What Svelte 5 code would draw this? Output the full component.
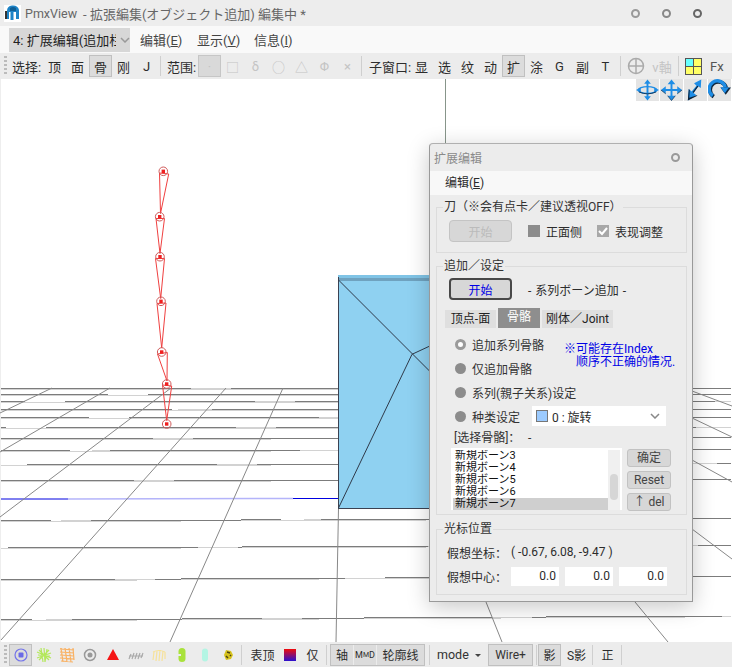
<script>
  const selectItems = ['顶', '面', '骨', '刚', 'J'];
  const rangeItems = ['·', '□', 'δ', '○', '△', 'Φ', '×'];
  const windowItems = ['显', '选', '纹', '动', '扩', '涂', 'G', '副', 'T'];
  const boneNames = ['新規ボーン3', '新規ボーン4', '新規ボーン5', '新規ボーン6', '新規ボーン7'];

  // floor grid, [y at left edge, y at right edge]
  const floorRows = [
    [388.5, 388], [395, 394], [402, 401], [410, 409], [418, 417], [428, 427], [439, 437],
    [451, 449], [465, 463], [481, 479], [521, 518], [548, 545], [580, 576], [620, 616]
  ];
  const floorCols = [
    [52, 388, 0, 413], [110, 388, 0, 452], [171, 388, 0, 517], [226, 388, 1, 640], [283, 388, 170, 642],
    [338.5, 508, 336, 642], [692, 391, 732, 406], [692, 418, 732, 437], [692, 460, 732, 482],
    [692, 529, 732, 559], [635, 602, 668, 642], [486, 602, 502, 642]
  ];

  // joints of the bone chain
  const joints = [[163.3, 171.3], [159.7, 216.7], [160, 256.7], [161, 301.3], [161.7, 352], [166.7, 384], [166.7, 424]];
  const cones = [
    '159.5,173 168.7,174 160.5,213.5',
    '156,218.5 164.5,218.5 160,253.5',
    '155.5,258.5 164.5,258.5 160.7,298.5',
    '157,303.5 166,303 161.7,348',
    '157.5,354 167.3,352.5 167,381',
    '162.5,385 171.7,386 166.7,420.5'
  ];
</script>

<div class="app">
  <header class="titlebar">
    <svg class="logo" viewBox="0 0 17 17">
      <rect width="17" height="17" fill="#fff" />
      <path d="M3 14V6q0-5 5-5.500q6-.5 7 4.500v9h-3V7H9.500v8H6.500V7H5v7z" fill="#1d83c6" />
      <path d="M6 3q3-2 6 0v3H6z" fill="#0e5f96" />
      <path d="M1 6h2v8H1z" fill="#333" />
    </svg>
    <span class="app-name">PmxView</span>
    <span class="doc-name">- 拡張編集(オブジェクト追加) 編集中 *</span>
    <div class="win-dots">
      <i class="dot d1"></i>
      <i class="dot d2"></i>
      <i class="dot d3"></i>
    </div>
  </header>

  <nav class="menubar">
    <div class="mode-combo">
      <span>4: 扩展编辑(追加栏</span>
      <svg viewBox="0 0 10 6" width="10" height="6"><path d="M1 1l4 4 4-4" fill="none" stroke="#999" stroke-width="1.500" /></svg>
    </div>
    <span class="menu-item">编辑(<u>E</u>)</span>
    <span class="menu-item">显示(<u>V</u>)</span>
    <span class="menu-item">信息(<u>I</u>)</span>
  </nav>

  <div class="toolbar">
    <i class="grip"></i>
    <span class="tb-label l1">选择:</span>
    {#each selectItems as item}
      <button class="tb" class:on={item === '骨'}>{item}</button>
    {/each}
    <i class="sep s1"></i>
    <span class="tb-label l2">范围:</span>
    {#each rangeItems as item, i}
      <button class="tb off" class:pressed={i === 0}>{item}</button>
    {/each}
    <i class="sep s2"></i>
    <span class="tb-label l3">子窗口:</span>
    {#each windowItems as item}
      <button class="tb" class:on={item === '扩'}>{item}</button>
    {/each}
    <i class="sep s3"></i>
    <button class="tb">
      <svg viewBox="0 0 18 18" width="18" height="18">
        <circle cx="9" cy="9" r="7.500" fill="none" stroke="#aaa" stroke-width="1.500" />
        <path d="M9 1v16M1 9h16" stroke="#aaa" stroke-width="1.500" />
      </svg>
    </button>
    <button class="tb off vaxis">v軸</button>
    <i class="sep s4"></i>
    <svg class="panes" viewBox="0 0 17 17" width="17" height="17">
      <rect x=".5" y=".5" width="16" height="16" fill="#ffff66" stroke="#555" />
      <rect x="1" y="1" width="7.500" height="7.500" fill="#66ffff" />
      <path d="M8.500 1v15M1 8.500h15" stroke="#555" />
    </svg>
    <span class="fx">Fx</span>
  </div>

  <main class="viewport">
    <svg class="scene" viewBox="0 79 732 563" width="732" height="563">
      {#each floorRows as [a, b], i}
        <line x1="1" y1={a + 0.5} x2="731" y2={b + 0.5} stroke="#d2d2d2" stroke-width="1.500" shape-rendering="crispEdges" />
        <line x1="1" y1={a} x2="731" y2={b} stroke="#7c7c7c" stroke-dasharray="190 40" stroke-dashoffset={i * 83} shape-rendering="crispEdges" />
      {/each}
      <line x1="1" y1="499" x2="68" y2="499" stroke="#0000e0" />
      <line x1="68" y1="499" x2="293" y2="498.500" stroke="#b4b4fa" stroke-width="1.500" />
      <line x1="293" y1="498.500" x2="338" y2="498.500" stroke="#0000e0" />
      {#each floorCols as [x1, y1, x2, y2]}
        <line {x1} {y1} {x2} {y2} stroke="#888" />
      {/each}
      <line x1="445.500" y1="79" x2="445.500" y2="143" stroke="#87958a" />

      <rect x="338" y="275" width="300" height="233" fill="#8fd1f1" />
      <rect x="338" y="275" width="300" height="3" fill="#80c4e6" />
      <rect x="338" y="278" width="300" height="3" fill="#6fa2bf" />
      <path d="M338.500 277V508M338 508.500H640" stroke="#3b4252" fill="none" />
      <path d="M338.500 280L432 373.500M412 354.300L432 345M412 354.300L338.500 508" stroke="#2f3a4a" fill="none" />

      {#each cones as points}
        <polygon {points} fill="none" stroke="#f04040" />
      {/each}
      {#each joints as [x, y]}
        <circle cx={x} cy={y} r="4.300" fill="none" stroke="#cf5a5a" />
        <rect x={x - 1.700} y={y - 1.700} width="3.400" height="3.400" fill="#f02020" />
      {/each}
    </svg>

    <div class="gizmos">
      <div class="gizmo">
        <svg viewBox="0 0 24 22" width="24" height="22">
          <path d="M12 0l3.500 4.500H13v13h2.500L12 22l-3.500-4.500H11v-13H8.500z" fill="#1e8de6" />
          <ellipse cx="12" cy="11" rx="9.500" ry="3.500" fill="none" stroke="#1e8de6" stroke-width="1.500" />
          <path d="M0 11l5-2.500v5zM24 11l-5-2.500v5z" fill="#1e8de6" />
          <path d="M3 13q9 4 18 0" fill="none" stroke="#12385c" />
        </svg>
      </div>
      <div class="gizmo">
        <svg viewBox="0 0 24 22" width="24" height="22">
          <path d="M12 0l4 5h-3v5h5V7l5 4-5 4v-3h-5v5h3l-4 5-4-5h3v-5H6v3l-5-4 5-4v3h5V5H8z" fill="#1e8de6" />
          <path d="M8 17l4 5 4-5M6 15l-5-4M18 15l5-4" fill="none" stroke="#12385c" stroke-width=".800" />
        </svg>
      </div>
      <div class="gizmo">
        <svg viewBox="0 0 24 22" width="24" height="22">
          <path d="M4 22l1-12 3 2.500 5-6L10.500 4 18 0l-.5 9-2.500-2-5 7 3 2.500z" fill="#1e8de6" />
          <path d="M4 22l1-12 1 1-.5 8 8-2.500 .5 .5zM17.500 9L15 7l-5 7-1-1 5-6.500" fill="#0d2238" />
        </svg>
      </div>
      <div class="gizmo">
        <svg viewBox="0 0 24 22" width="24" height="22">
          <path d="M6 18A8.500 8.500 0 1 1 19 9" fill="none" stroke="#10263c" stroke-width="4" />
          <path d="M5 17A8.500 8.500 0 1 1 18 8" fill="none" stroke="#1e8de6" stroke-width="3.500" />
          <path d="M13 8.500h11l-5.500 7.500z" fill="#10263c" />
          <path d="M13 8h9l-4.500 6.500z" fill="#1e8de6" />
        </svg>
      </div>
    </div>

    <section class="dialog">
      <div class="dlg-title">
        <span>扩展编辑</span>
        <i class="dot d1 small"></i>
      </div>
      <div class="dlg-menu">编辑(<u>E</u>)</div>

      <div class="dlg-body">
        <fieldset class="g1">
          <legend>刀（※会有点卡／建议透视OFF）</legend>
          <div class="knife-row">
            <button class="big-btn disabled">开始</button>
            <i class="check-box"></i>
            <span>正面侧</span>
            <i class="check-box checked">
              <svg viewBox="0 0 12 12" width="12" height="12"><path d="M2 6l3 3 5-6" fill="none" stroke="#fff" stroke-width="2" /></svg>
            </i>
            <span>表现调整</span>
          </div>
        </fieldset>

        <fieldset class="g2">
          <legend>追加／设定</legend>
          <div class="start-row">
            <button class="big-btn focused">开始</button>
            <span class="series">-&nbsp;系列ボーン追加&nbsp;-</span>
          </div>
          <div class="tabs">
            <span class="tab t1">顶点-面</span>
            <span class="tab sel">骨骼</span>
            <span class="tab t3">刚体／Joint</span>
          </div>

          <div class="opts">
            <div class="radios">
              <label class="radio"><i class="rb on"></i>追加系列骨骼</label>
              <label class="radio"><i class="rb"></i>仅追加骨骼</label>
              <label class="radio"><i class="rb"></i>系列(親子关系)设定</label>
            </div>
            <p class="note">※可能存在Index<br /><span>顺序不正确的情况.</span></p>
          </div>
          <div class="type-row">
            <label class="radio"><i class="rb"></i>种类设定</label>
            <div class="type-combo">
              <i class="swatch"></i>
              <span>0 : 旋转</span>
              <svg viewBox="0 0 10 6" width="10" height="6"><path d="M1 1l4 4 4-4" fill="none" stroke="#888" stroke-width="1.500" /></svg>
            </div>
          </div>

          <div class="sel-label"><span>[选择骨骼]：</span><span>-</span></div>
          <div class="list-row">
            <div class="bone-list">
              <div class="rows">
                {#each boneNames as name, i}
                  <div class="bone" class:current={i === boneNames.length - 1}>{name}</div>
                {/each}
              </div>
              <div class="scroll"><i></i></div>
            </div>
            <div class="side-btns">
              <button class="small-btn">确定</button>
              <button class="small-btn">Reset</button>
              <button class="small-btn">↑ del</button>
            </div>
          </div>
        </fieldset>

        <fieldset class="g3">
          <legend>光标位置</legend>
          <div class="coord-row"><span class="coord-name">假想坐标：</span><span class="coords">( -0.67, 6.08, -9.47 )</span></div>
          <div class="coord-row">
            <span class="coord-name">假想中心：</span>
            <span class="num">0.0</span>
            <span class="num">0.0</span>
            <span class="num">0.0</span>
          </div>
        </fieldset>
      </div>
    </section>
  </main>

  <footer class="bottombar">
    <i class="grip"></i>
    <button class="tb on first">
      <svg viewBox="0 0 16 16" width="16" height="16"><circle cx="8" cy="8" r="6" fill="none" stroke="#7474ea" stroke-width="1.200" /><rect x="5.500" y="5.500" width="5" height="5" rx="1" fill="#6a6ae6" /></svg>
    </button>
    <button class="tb">
      <svg viewBox="0 0 16 16" width="16" height="16"><path d="M2 8l12 1M3 3l10 10M13 3L3 13M8 1l1 14M5 1l2 14M11 2l-2 13M1 5l14 6M1 11l14-5" stroke="#b4e85c" stroke-width="1.200" /></svg>
    </button>
    <button class="tb">
      <svg viewBox="0 0 16 16" width="16" height="16"><path d="M1 2l14 1M1 5l14 1M1 8l14 1M1 11l14 1M2 14l12 1M2 1l2 14M6 1l2 14M10 1l2 14M14 1l1 12" stroke="#f9b163" stroke-width="1.200" /></svg>
    </button>
    <button class="tb">
      <svg viewBox="0 0 16 16" width="16" height="16"><circle cx="8" cy="8" r="5.500" fill="none" stroke="#999" stroke-width="1.500" /><circle cx="8" cy="8" r="2.500" fill="#999" /></svg>
    </button>
    <button class="tb">
      <svg viewBox="0 0 16 16" width="16" height="16"><path d="M8 2l6 11H2z" fill="#f51414" /></svg>
    </button>
    <button class="tb">
      <svg viewBox="0 0 16 16" width="16" height="16"><path d="M1 12l2-5M4 12l2-6M7 12l2-6M10 12l2-6M13 11l2-5M1 9h14" stroke="#aaa" stroke-width="1.200" /></svg>
    </button>
    <button class="tb">
      <svg viewBox="0 0 16 16" width="16" height="16"><path d="M2 13l1-8M5 14l1-10M8 14l1-11M11 14l1-10M14 12l0-7M2 5q6-3 12 0" fill="none" stroke="#f7e29a" stroke-width="1.200" /></svg>
    </button>
    <button class="tb">
      <svg viewBox="0 0 16 16" width="16" height="16"><rect x="4.500" y="1" width="7" height="14" rx="3.500" fill="#a9e23c" /><path d="M3 8h4" stroke="#ececec" stroke-width="2" /></svg>
    </button>
    <button class="tb">
      <svg viewBox="0 0 16 16" width="16" height="16"><rect x="5" y="1.500" width="6" height="13" rx="3" fill="#b4f5e4" /></svg>
    </button>
    <button class="tb">
      <svg viewBox="0 0 16 16" width="16" height="16"><path d="M6 3l5 1 2 4-2 4-5 1-2-5z" fill="#d6c21c" /><path d="M7 5l3 1M6 9l2 2M10 8l1 1" stroke="#4b4312" stroke-width="1.500" /></svg>
    </button>
    <i class="sep b1"></i>
    <button class="tb w31">表顶</button>
    <button class="tb"><i class="gradient"></i></button>
    <button class="tb">仅</button>
    <i class="sep b2"></i>
    <div class="toggle-group">
      <button class="tb">轴</button>
      <button class="tb mmd">M<sub>M</sub>D</button>
      <button class="tb w47">轮廓线</button>
    </div>
    <i class="sep b3"></i>
    <span class="mode">mode</span>
    <i class="caret"></i>
    <button class="tb on wire">Wire+</button>
    <i class="sep b4"></i>
    <button class="tb on">影</button>
    <button class="tb w29">S影</button>
    <i class="sep b5"></i>
    <button class="tb">正</button>
    <i class="sep b6"></i>
  </footer>
</div>

<style>
  :global(body) {
    margin: 0;
    background: #ececec;
  }

  .app {
    display: flex;
    flex-direction: column;
    width: 732px;
    height: 667px;
    overflow: hidden;
    font-family: Roboto, "Noto Sans CJK SC", sans-serif;
    font-size: 12px;
    color: #2c2c2c;
  }

  i {
    display: block;
    font-style: normal;
  }

  button {
    font: inherit;
    color: inherit;
    padding: 0;
    background: none;
    border: 0;
  }

  /* window chrome */
  .titlebar {
    display: flex;
    align-items: center;
    height: 26px;
    padding-left: 4px;
    background: #ededed;
    color: #666;
    font-size: 13px;
  }

  .logo {
    width: 17px;
    height: 17px;
    margin-right: 4px;
  }

  .app-name {
    font-size: 12.5px;
    margin-right: 6px;
  }

  .win-dots {
    display: flex;
    gap: 22px;
    margin-left: auto;
    margin-right: 30px;
  }

  .dot {
    width: 9px;
    height: 9px;
    box-sizing: border-box;
    border-radius: 50%;
    border: 2.5px solid #999;
  }

  .d2 {
    border-color: #888;
  }

  .d3 {
    border-color: #666;
  }

  .menubar {
    display: flex;
    align-items: center;
    height: 27px;
    padding-left: 9px;
    background: #f9f9f9;
    font-size: 13px;
    color: #444;
  }

  .mode-combo {
    display: flex;
    align-items: center;
    width: 121px;
    height: 24px;
    box-sizing: border-box;
    padding-left: 4px;
    margin-right: 10px;
    background: #d7d7d7;
    color: #222;
    white-space: nowrap;
  }

  .mode-combo span {
    width: 103px;
    overflow: hidden;
    margin-right: 4px;
  }

  .menu-item {
    width: 57px;
    white-space: nowrap;
  }

  .toolbar,
  .bottombar {
    display: flex;
    align-items: center;
    background: #ececec;
    padding-left: 4px;
    font-size: 13px;
  }

  .toolbar {
    height: 26px;
  }

  .bottombar {
    height: 25px;
    font-size: 12px;
  }

  .grip {
    width: 3px;
    height: 20px;
    background: repeating-linear-gradient(#bbb 0 2px, transparent 2px 4px);
  }

  .sep {
    width: 1px;
    height: 20px;
    background: #cfcfcf;
  }

  .tb-label {
    white-space: nowrap;
  }

  .l1 {
    width: 31px;
    margin-left: 5px;
  }

  .l2 {
    width: 31px;
  }

  .l3 {
    width: 41px;
  }

  .s1 {
    margin: 0 6px 0 2px;
  }

  .s2 {
    margin: 0 7px 0 2px;
  }

  .s3 {
    margin: 0 3px;
  }

  .s4 {
    margin: 0 6px 0 1px;
  }

  .tb {
    display: flex;
    align-items: center;
    justify-content: center;
    flex: none;
    width: 23px;
    height: 22px;
    box-sizing: border-box;
    border: 1px solid transparent;
    white-space: nowrap;
  }

  .tb svg {
    display: block;
  }

  .tb.on {
    background: #dcdcdc;
    border-color: #c0c0c0;
  }

  .tb.off {
    color: #c4c4c4;
  }

  .tb.pressed {
    background: #d9d9d9;
    border-color: #c6c6c6;
  }

  .vaxis {
    width: 30px;
  }

  .panes {
    flex: none;
  }

  .fx {
    margin-left: 8px;
    color: #555;
  }

  /* 3D canvas */
  .viewport {
    position: relative;
    flex: 1;
    background: #fff;
    border-left: 1px solid #eee;
  }

  .scene {
    position: absolute;
    left: -1px;
    top: 0;
    display: block;
  }

  .gizmos {
    position: absolute;
    right: 1px;
    top: 0;
    display: flex;
    gap: 1px;
  }

  .gizmo {
    display: flex;
    width: 23px;
    height: 22px;
    justify-content: center;
    background: #e4e4e4;
  }

  /* floating panel */
  .dialog {
    position: absolute;
    left: 428px;
    top: 64px;
    width: 264px;
    height: 459px;
    box-sizing: border-box;
    background: #ececec;
    border: 1px solid #999;
    border-top-color: #b0b0b0;
    border-radius: 4px 4px 0 0;
    box-shadow: 0 5px 22px rgba(0, 0, 0, 0.22);
  }

  .dlg-title {
    display: flex;
    align-items: center;
    justify-content: space-between;
    height: 27px;
    padding: 0 12px 0 4px;
    color: #8a8a8a;
  }

  .dot.small {
    width: 9px;
    height: 9px;
  }

  .dlg-menu {
    height: 24px;
    line-height: 24px;
    padding-left: 15px;
    background: #f8f8f8;
  }

  .dlg-body {
    display: flex;
    flex-direction: column;
    padding: 0 5px 0 6px;
  }

  fieldset {
    margin: 0;
    padding: 0;
    min-width: 0;
    box-sizing: border-box;
    border: 1.5px solid #dcdcdc;
  }

  legend {
    padding: 0 1px;
    margin-left: 6px;
    line-height: 16px;
    color: #333;
  }

  .g1 {
    height: 54px;
    margin-top: 4px;
  }

  .g2 {
    height: 257px;
    margin-top: 5px;
  }

  .g3 {
    height: 74px;
    margin-top: 6px;
  }

  .knife-row {
    display: flex;
    align-items: center;
    margin: 5px 0 0 12px;
  }

  .big-btn {
    width: 63px;
    height: 22px;
    border-radius: 4px;
    background: #d7d7d7;
    margin-right: 16px;
  }

  .big-btn.disabled {
    border: 1px solid #c4c4c4;
    color: #bbb;
  }

  .big-btn.focused {
    border: 2px solid #484848;
    color: #0000e6;
  }

  .check-box {
    width: 12px;
    height: 12px;
    background: #8c8c8c;
    margin-right: 6px;
  }

  .check-box.checked {
    margin-left: 15px;
    background: #a8a8a8;
  }

  .check-box svg {
    display: block;
  }

  .start-row {
    display: flex;
    align-items: center;
    margin: 4px 0 0 12px;
  }

  .series {
    font-size: 12px;
    word-spacing: 1px;
  }

  .tabs {
    display: flex;
    align-items: flex-end;
    gap: 2px;
    margin: 8px 0 0 8px;
  }

  .tab {
    display: block;
    height: 18px;
    line-height: 18px;
    text-align: center;
    background: #dfdfdf;
    color: #222;
  }

  .t1 {
    width: 51px;
  }

  .t3 {
    width: 71px;
  }

  .tab.sel {
    width: 42px;
    height: 20px;
    line-height: 18px;
    background: #8e8e8e;
    color: #fff;
  }

  .opts {
    display: flex;
    margin: 4px 0 0 18px;
  }

  .radios {
    display: flex;
    flex-direction: column;
    width: 109px;
  }

  .radio {
    display: flex;
    align-items: center;
    height: 24px;
    gap: 6px;
    white-space: nowrap;
    color: #333;
  }

  .rb {
    width: 11px;
    height: 11px;
    flex: none;
    border-radius: 50%;
    background: #8c8c8c;
  }

  .rb.on {
    box-sizing: border-box;
    background: #fff;
    border: 3px solid #9a9a9a;
  }

  .note {
    margin: 11px 0 0 0;
    color: #0000e6;
    line-height: 13px;
    white-space: nowrap;
  }

  .note span {
    margin-left: 12px;
  }

  .type-row {
    display: flex;
    align-items: center;
    margin-left: 18px;
  }

  .type-combo {
    display: flex;
    align-items: center;
    width: 134px;
    height: 20px;
    box-sizing: border-box;
    margin-left: 12px;
    padding: 0 6px 0 4px;
    background: #fff;
  }

  .swatch {
    width: 12px;
    height: 12px;
    box-sizing: border-box;
    margin-right: 4px;
    background: #9ccbff;
    border: 1px solid #777;
  }

  .type-combo svg {
    margin-left: auto;
  }

  .sel-label {
    display: flex;
    justify-content: flex-start;
    height: 16px;
    margin: 2px 0 0 17px;
    line-height: 16px;
    color: #333;
  }

  .sel-label span:first-child {
    width: 74px;
  }

  .list-row {
    display: flex;
    margin: 2px 0 0 14px;
  }

  .bone-list {
    display: flex;
    width: 171px;
    height: 62px;
    padding: 2px 2px 0;
    box-sizing: border-box;
    background: #fff;
  }

  .rows {
    display: flex;
    flex-direction: column;
    justify-content: flex-end;
    width: 155px;
    overflow: hidden;
  }

  .bone {
    height: 12px;
    line-height: 12px;
    padding-left: 2px;
    font-size: 11px;
    color: #111;
    flex: none;
  }

  .bone.current {
    background: #cfcfcf;
  }

  .scroll {
    width: 12px;
    background: #f0f0f0;
    padding: 24px 2px 0;
    box-sizing: border-box;
  }

  .scroll i {
    height: 26px;
    border-radius: 4px;
    background: #d6d6d6;
  }

  .side-btns {
    display: flex;
    flex-direction: column;
    gap: 4px;
    margin: 1px 0 0 5px;
  }

  .small-btn {
    width: 44px;
    height: 18px;
    box-sizing: border-box;
    border: 1px solid #c2c2c2;
    border-radius: 3px;
    background: #d7d7d7;
    color: #444;
    line-height: 14px;
  }

  .coord-row {
    display: flex;
    align-items: center;
    height: 24px;
    margin-left: 10px;
  }

  .coord-row:first-of-type {
    margin-top: 3px;
  }

  .coord-name {
    width: 64px;
    white-space: nowrap;
  }

  .coords {
    white-space: nowrap;
  }

  .num {
    width: 48px;
    height: 19px;
    line-height: 19px;
    margin-right: 6px;
    padding-right: 3px;
    box-sizing: border-box;
    text-align: right;
    background: #fff;
  }

  /* bottom toolbar */
  .first {
    margin-left: 2px;
  }

  .gradient {
    width: 12px;
    height: 12px;
    background: linear-gradient(#f00a0a, #2a10d0);
  }

  .w31 {
    width: 31px;
  }

  .w47 {
    width: 47px;
  }

  .w29 {
    width: 29px;
    margin-left: 1px;
  }

  .b1 {
    margin: 0 5px 0 2px;
  }

  .b2 {
    margin: 0 3px 0 2px;
  }

  .b3 {
    margin: 0 7px 0 4px;
  }

  .b4 {
    margin: 0 1px 0 3px;
  }

  .b5 {
    margin: 0 3px 0 1px;
  }

  .b6 {
    margin-left: 2px;
  }

  .toggle-group {
    display: flex;
    background: #dcdcdc;
    border: 1px solid #c0c0c0;
    box-sizing: border-box;
    height: 22px;
  }

  .toggle-group .tb {
    height: 20px;
    border: 0;
    border-right: 1px solid #ececec;
  }

  .toggle-group .tb:last-child {
    border-right: 0;
  }

  .mmd {
    font-size: 9px;
  }

  .mmd sub {
    font-size: 7px;
  }

  .mode {
    width: 35px;
    font-size: 12.5px;
    color: #333;
  }

  .caret {
    width: 0;
    height: 0;
    margin: 2px 4px 0 3px;
    border: 3px solid transparent;
    border-top-color: #444;
    border-bottom: 0;
  }

  .tb.wire {
    width: 45px;
    margin-left: 3px;
    color: #333;
  }
</style>
